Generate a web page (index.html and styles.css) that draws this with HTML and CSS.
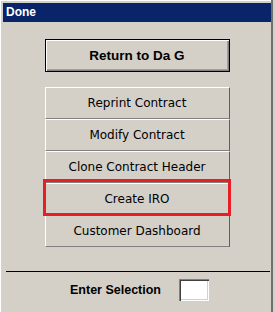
FILE: index.html
```html
<!DOCTYPE html>
<html lang="en">
<head>
    <meta charset="UTF-8">
    <meta name="viewport" content="width=device-width, initial-scale=1.0">
    <title>Done</title>
    <link rel="stylesheet" href="styles.css">
</head>
<body>

    <div class="window">
        <div class="panel">
            <div class="titlebar">Done</div>

            <div class="content">
                <button type="button" class="btn-default">Return to Da G</button>

                <div class="menu">
                    <button type="button" class="menu-btn">Reprint Contract</button>
                    <button type="button" class="menu-btn">Modify Contract</button>
                    <button type="button" class="menu-btn">Clone Contract Header</button>
                    <div class="highlighted">
                        <button type="button" class="menu-btn">Create IRO</button>
                    </div>
                    <button type="button" class="menu-btn">Customer Dashboard</button>
                </div>

                <hr class="divider">

                <div class="selection">
                    <label for="selection">Enter Selection</label>
                    <input type="text" id="selection" name="selection">
                </div>
            </div>
        </div>
    </div>

</body>
</html>
```

FILE: styles.css
```css
body {
    margin: 0;
    padding: 0;
    background-color: #d4d0c8;
    font-family: "DejaVu Sans", sans-serif;
}
.window {
    display: flex;
    height: 312px;
}
.panel {
    width: 268px;
    padding: 3px 0 0 3px;
    border-right: 2px solid #6f6f6f;
    box-shadow: inset 1px 1px 0 #ffffff;
}
.titlebar {
    height: 19px;
    line-height: 19px;
    background-color: #0a246a;
    color: #ffffff;
    font-family: "Liberation Sans", Arial, sans-serif;
    font-weight: bold;
    font-size: 12px;
    padding-left: 3px;
}
.content {
    padding-top: 17px;
}
button {
    display: block;
    margin: 0 auto;
    padding: 0;
    background-color: #d4d0c8;
    color: #000;
    font-family: "DejaVu Sans", sans-serif;
    cursor: pointer;
    box-sizing: border-box;
}
.btn-default {
    width: 185px;
    height: 33px;
    border: 1px solid #000;
    box-shadow: inset 1px 1px 0 #ffffff, inset -1px -1px 0 #808080, inset -2px -2px 0 #a0a0a0;
    font-family: "Liberation Sans", Arial, sans-serif;
    font-weight: bold;
    font-size: 13.5px;
}
.menu {
    margin-top: 15px;
}
.menu-btn {
    width: 185px;
    height: 32px;
    border-top: 1px solid #ffffff;
    border-left: 1px solid #ffffff;
    border-right: 1px solid #5f5f5f;
    border-bottom: 1px solid #808080;
    font-size: 12px;
}
.highlighted {
    position: relative;
    width: 185px;
    margin: 0 auto;
}
.highlighted::after {
    content: "";
    position: absolute;
    left: -2px;
    top: -4px;
    width: 182px;
    height: 31px;
    border: 3px solid #e81e26;
    pointer-events: none;
}
.divider {
    height: 1px;
    border: 0;
    background-color: #000;
    margin: 24px 1px 0 3px;
}
.selection {
    display: flex;
    align-items: center;
    justify-content: center;
    gap: 18px;
    padding: 7px 0 0 5px;
}
.selection label {
    font-family: "Liberation Sans", Arial, sans-serif;
    font-weight: bold;
    font-size: 12.5px;
    color: #000;
}
.selection input {
    width: 30px;
    height: 22px;
    box-sizing: border-box;
    margin: 0;
    padding: 2px;
    border: 0;
    background: #ffffff;
    box-shadow: inset 1px 1px 0 #808080, inset 2px 2px 0 #404040, inset -1px -1px 0 #ffffff, inset -2px -2px 0 #d4d0c8;
}
```
